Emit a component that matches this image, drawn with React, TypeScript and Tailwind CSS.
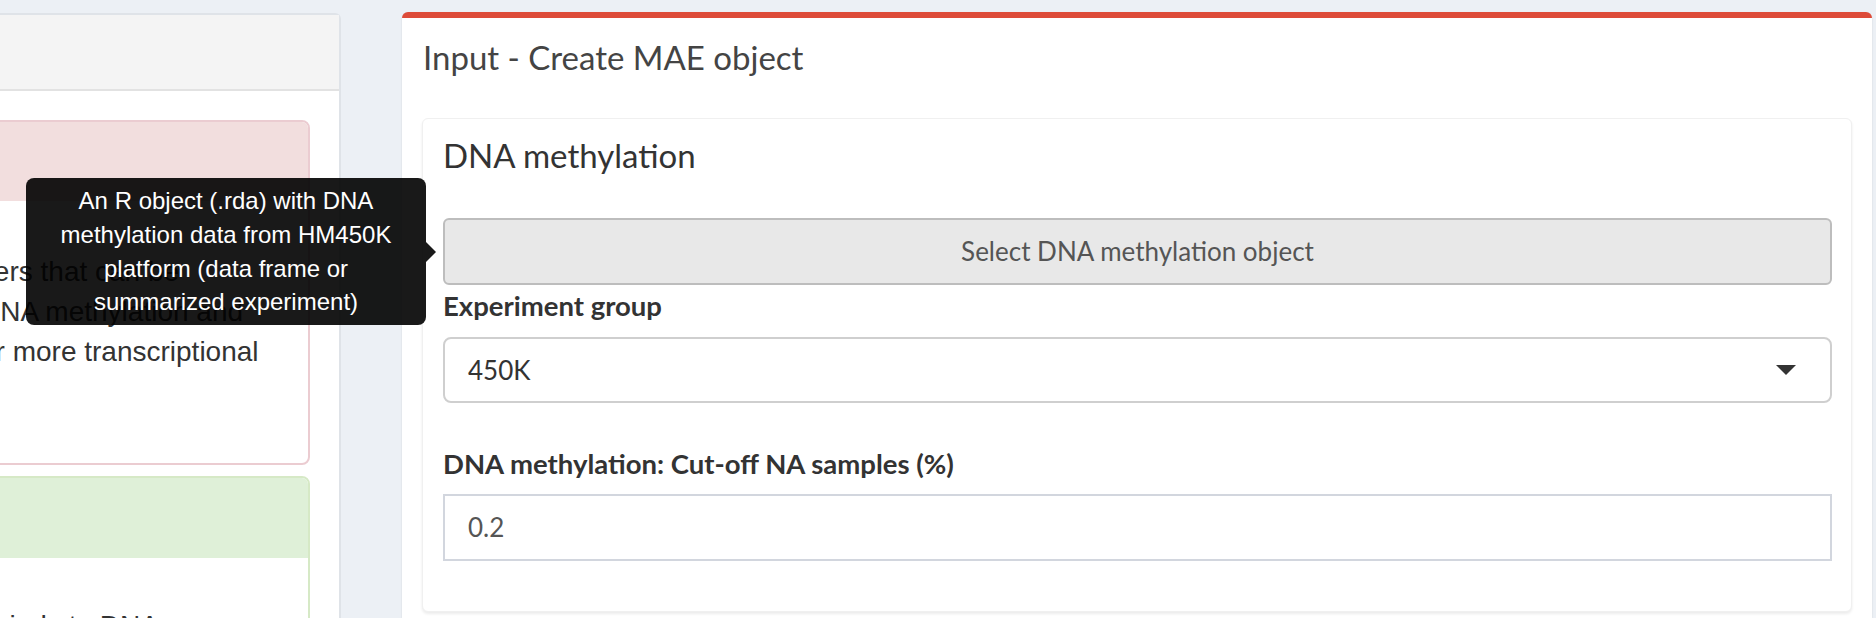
export default function App() {
  return (
    <div className="relative flex h-[618px] w-[1876px] overflow-hidden bg-[#ecf0f5] font-['Lato',sans-serif]">
      {/* Left column (mostly scrolled out of view) */}
      <div className="mt-[13px] w-[341px] shrink-0 overflow-hidden">
        <div className="h-full rounded-tr-[6px] border-t-2 border-r-2 border-[#dfe3e8] bg-white">
          <div className="h-[76px] border-b-2 border-[#e2e2e2] bg-[#f4f4f4]" />
          <div className="pt-[29px] pr-[29px] font-['Liberation_Sans',Arial,sans-serif] text-[28px] leading-[40px] text-[#333]">
            {/* Danger panel */}
            <div className="-ml-[200px] rounded-[8px] border-2 border-[#ebccd1]">
              <div className="h-[79px] rounded-t-[6px] bg-[#f2dede]" />
              <div className="h-[262px] overflow-hidden whitespace-nowrap pt-[51px]">
                <div className="ml-[100px]">enhancers that can be</div>
                <div className="ml-[178px]">DNA methylation and</div>
                <div className="ml-[178px]">or more transcriptional</div>
              </div>
            </div>

            {/* Success panel */}
            <div className="-ml-[200px] mt-[11px] rounded-[8px] border-2 border-[#d6e9c6]">
              <div className="h-[80px] rounded-t-[6px] bg-[#dff0d8]" />
              <div className="h-[120px] overflow-hidden whitespace-nowrap pt-[48px]">
                <div className="ml-[192px]">binds to DNA</div>
              </div>
            </div>
          </div>
        </div>
      </div>

      {/* Input box */}
      <div className="ml-[61px] mr-[4px] mt-[12px] flex-1 rounded-t-[6px] border-t-[6px] border-[#dd4b39] bg-white shadow-[0_1px_2px_rgba(0,0,0,0.12)]">
        <div className="h-[80px] px-[21px] pt-[19px]">
          <h3 className="text-[33px] leading-[40px] text-[#444]">Input - Create MAE object</h3>
        </div>
        <div className="px-[20px] pt-[20px]">
          <div className="rounded-[6px] border border-[#f0f0f0] bg-white pb-[50px] pl-[20px] pr-[19px] pt-[16px] shadow-[0_2px_3px_rgba(0,0,0,0.08)]">
            <h3 className="text-[33px] leading-[40px] text-[#333]">DNA methylation</h3>

            <button className="mt-[43px] flex h-[67px] w-full items-center justify-center rounded-[6px] border-2 border-[#bdbdbd] bg-[#e8e8e8] text-[26px] text-[#555]">
              Select DNA methylation object
            </button>

            <div className="mt-[6px] text-[27.5px] font-bold leading-[30px] text-[#333]">Experiment group</div>
            <div className="mt-[16px] flex h-[66px] items-center justify-between rounded-[8px] border-2 border-[#cfcfcf] pl-[23px] pr-[34px] text-[26px] text-[#333]">
              <span>450K</span>
              <span className="h-0 w-0 border-x-[10px] border-t-[10px] border-x-transparent border-t-[#333]" />
            </div>

            <div className="mt-[46px] text-[27.5px] font-bold leading-[30px] text-[#333]">
              DNA methylation: Cut-off NA samples (%)
            </div>
            <div className="mt-[15px] flex h-[67px] items-center border-2 border-[#d2d6de] pl-[23px] text-[26px] text-[#555]">
              0.2
            </div>
          </div>
        </div>
      </div>

      {/* Tooltip */}
      <div className="absolute left-[26px] top-[178px] w-[400px] rounded-[8px] bg-[rgba(0,0,0,0.9)] px-[16px] py-[6px] text-center font-['Liberation_Sans',Arial,sans-serif] text-[24px] leading-[33.75px] text-white">
        An R object (.rda) with DNA methylation data from HM450K platform (data frame or summarized experiment)
        <span className="absolute right-[-10px] top-1/2 h-0 w-0 -translate-y-1/2 border-y-[10px] border-l-[10px] border-y-transparent border-l-[rgba(0,0,0,0.9)]" />
      </div>
    </div>
  );
}
